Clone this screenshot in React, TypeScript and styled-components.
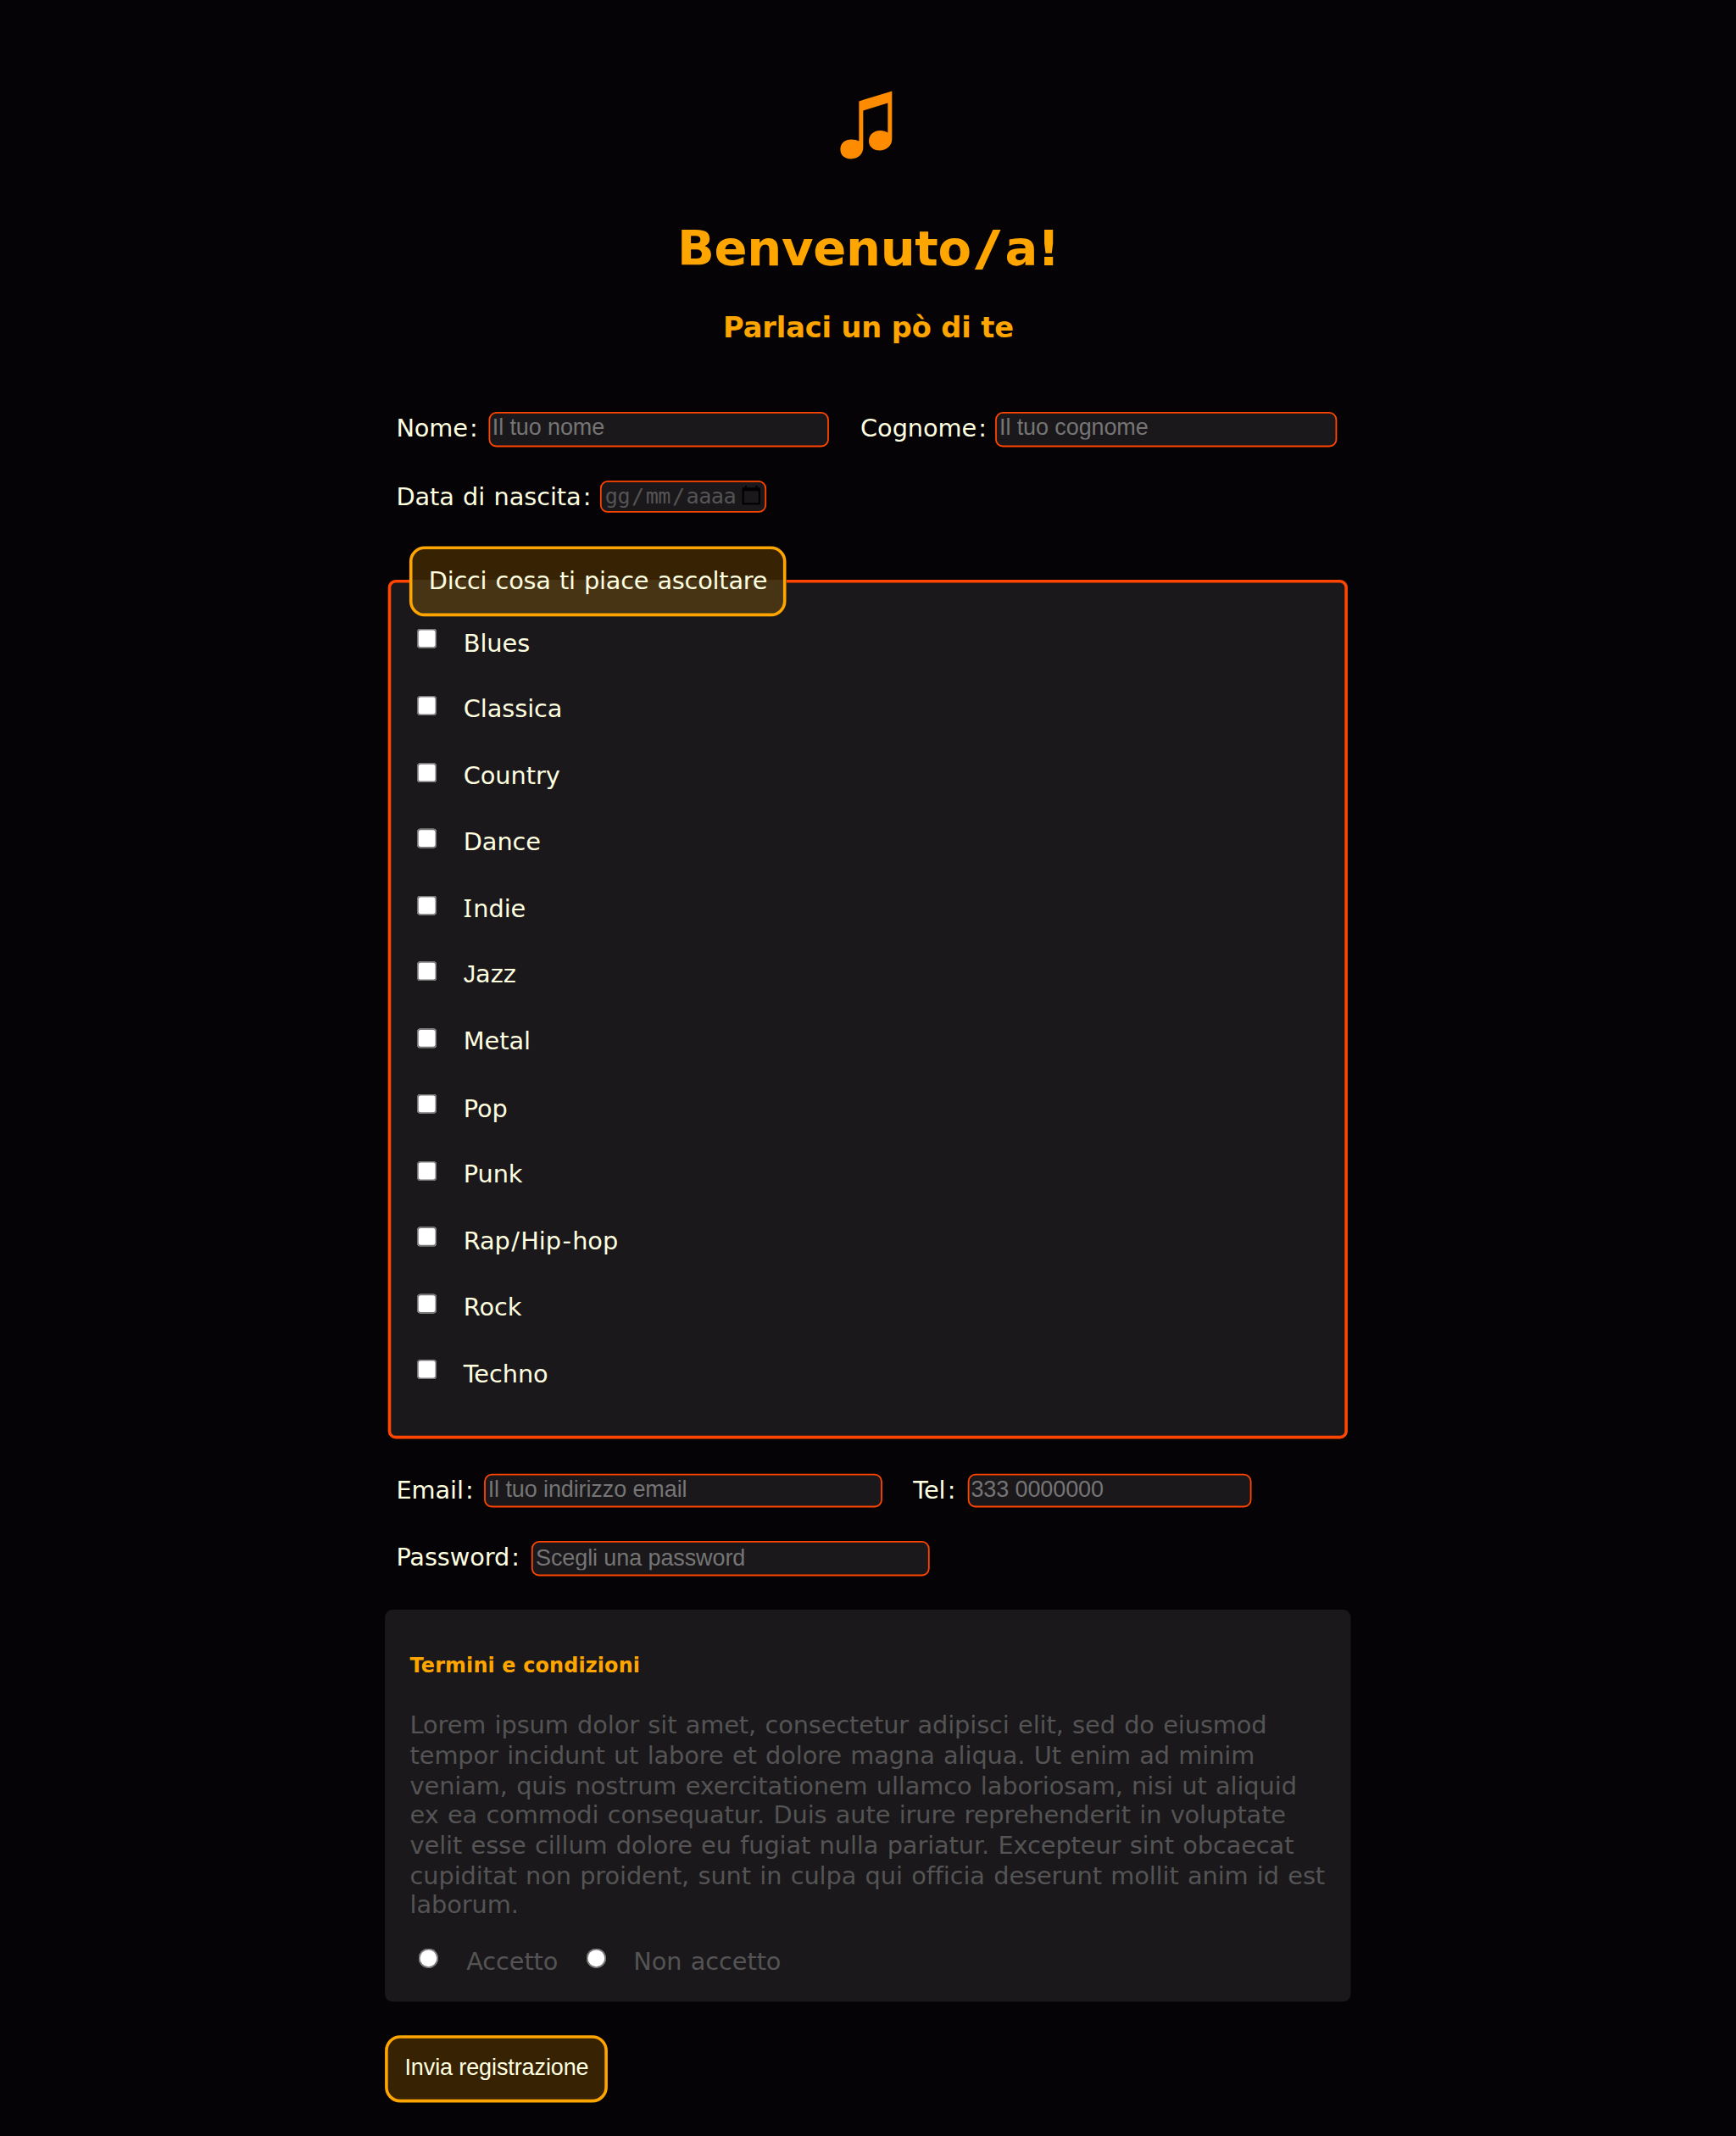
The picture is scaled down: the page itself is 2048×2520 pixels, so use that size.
import React from "react";
import styled, { createGlobalStyle } from "styled-components";

const GlobalStyle = createGlobalStyle`
  html, body {
    margin: 0;
    background: #050306;
  }
  body {
    font-family: "DejaVu Sans", Verdana, sans-serif;
    font-size: 16px;
    letter-spacing: -0.05px;
    word-spacing: 0.7px;
    color: #ffffe0;
  }
`;

const Viewport = styled.div`
  width: 2048px;
  height: 2520px;
  overflow: hidden;
`;

const Page = styled.div`
  width: 1137.78px;
  height: 1400px;
  box-sizing: border-box;
  padding-top: 52.8px;
  display: flex;
  flex-direction: column;
  align-items: center;
  transform: translateX(0.5px) scale(1.8);
  transform-origin: 0 0;
`;

const Logo = styled.svg`
  width: 55.56px;
  height: 55.56px;
  margin-right: 5px;
  fill: #ff8c00;
`;

const Title = styled.h1`
  margin: 36px 0 0;
  font-size: 32px;
  line-height: 38px;
  letter-spacing: -0.18px;
  color: #ffa500;
  white-space: nowrap;
`;

const WideSlash = styled.span`
  display: inline-block;
  width: 22px;
  text-align: center;
  transform: scaleX(1.45);
`;

const Subtitle = styled.h3`
  margin: 20.8px 0 44.1px;
  font-size: 18.72px;
  line-height: 23px;
  letter-spacing: -0.08px;
  word-spacing: 0;
  color: #ffa500;
  white-space: nowrap;
`;

const Form = styled.form`
  width: 633px;
  display: flex;
  flex-direction: column;
`;

const Row = styled.div<{ $bottom?: number }>`
  display: flex;
  align-items: flex-start;
  padding-left: 7px;
  height: 22.4px;
  margin-bottom: ${(p) => p.$bottom ?? 22}px;
`;

const Label = styled.label<{ $width: number; $gap?: number; $line?: number }>`
  flex: none;
  width: ${(p) => p.$width}px;
  margin-left: ${(p) => p.$gap ?? 0}px;
  line-height: ${(p) => p.$line ?? 22}px;
  white-space: nowrap;
`;

const Colon = styled.span`
  padding-left: 1.2px;
`;

const Input = styled.input<{ $width: number; $lift: number }>`
  flex: none;
  box-sizing: border-box;
  width: ${(p) => p.$width}px;
  height: 22.4px;
  margin: 0;
  padding: 0 1.5px ${(p) => p.$lift}px;
  border: 1px solid #ff4500;
  border-radius: 5px;
  background: #1a181b;
  color: #ffffe0;
  font: 15px "Liberation Sans", Arial, sans-serif;
  letter-spacing: -0.06px;
  word-spacing: 0;
  outline: none;
  &::placeholder {
    color: #757575;
  }
`;

const DateField = styled.div`
  flex: none;
  box-sizing: border-box;
  display: flex;
  justify-content: space-between;
  width: 109.4px;
  height: 21.5px;
  padding: 1px 3.3px 0 2.5px;
  border: 1px solid #ff4500;
  border-radius: 5px;
  background: #1a181b;
  color: #545454;
  font-family: "DejaVu Sans Mono", monospace;
  font-size: 14px;
  line-height: 17.5px;
  letter-spacing: -0.3px;
`;

const DateParts = styled.span`
  display: flex;
  gap: 1.1px;
`;

const CalendarIcon = styled.svg`
  width: 12.2px;
  height: 13px;
  margin-top: 1.8px;
`;

const Genres = styled.fieldset`
  box-sizing: border-box;
  height: 585.2px;
  margin: 0 2px 22.9px;
  padding: 0 12px;
  border: 2px solid #ff4500;
  border-radius: 5px;
  background: #1a181b;
`;

const Legend = styled.legend`
  box-sizing: border-box;
  width: 247px;
  height: 45.7px;
  padding: 0 10.3px;
  border: 2px solid #ffa500;
  border-radius: 10px;
  background: rgba(255, 165, 0, 0.2);
  line-height: 41.7px;
  letter-spacing: -0.13px;
  white-space: nowrap;
`;

const GenreList = styled.ul`
  list-style: none;
  margin: 7.2px 0 0;
  padding: 0;
`;

const Genre = styled.li`
  display: flex;
  align-items: flex-start;
  height: 43.53px;
`;

const Checkbox = styled.input`
  width: 13px;
  height: 13px;
  margin: 1.6px 17.5px 0 4.6px;
`;

const OptionLabel = styled.label<{ $width?: number }>`
  width: ${(p) => (p.$width ? p.$width + "px" : "auto")};
  line-height: 21.7px;
  white-space: nowrap;
`;

const SerifI = styled.span`
  font-family: "Noto Sans", sans-serif;
  font-size: 16.4px;
  line-height: 1;
  padding-right: 0.9px;
`;

const BaselineJ = styled.span`
  font-family: "Liberation Sans", Arial, sans-serif;
  line-height: 1;
`;

const Spread = styled.span`
  padding: 0 0.8px;
`;

const Terms = styled.section`
  box-sizing: border-box;
  height: 257px;
  margin-bottom: 21.9px;
  padding: 29px 16px 0;
  border-radius: 5px;
  background: #1a181b;
  color: #545454;
`;

const TermsTitle = styled.h5`
  margin: 0 0 21.6px;
  font-size: 13.28px;
  line-height: 16px;
  letter-spacing: 0.08px;
  word-spacing: 0;
  color: #ffa500;
`;

const TermsText = styled.p`
  margin: 0 0 16.2px;
  line-height: 19.63px;
  white-space: nowrap;
`;

const Choices = styled.div`
  display: flex;
  align-items: flex-start;
`;

const Radio = styled.input`
  width: 13px;
  height: 13px;
  margin: 2.2px 18px 0 6px;
`;

const Submit = styled.button`
  box-sizing: border-box;
  width: 145.8px;
  height: 43.9px;
  padding: 0 0 3px;
  border: 2px solid #ffa500;
  border-radius: 10px;
  background: rgba(255, 165, 0, 0.2);
  color: #ffffe0;
  font: 15px "Liberation Sans", Arial, sans-serif;
  letter-spacing: -0.06px;
  word-spacing: 0;
  white-space: nowrap;
`;

const genres = [
  "Blues",
  "Classica",
  "Country",
  "Dance",
  "Indie",
  "Jazz",
  "Metal",
  "Pop",
  "Punk",
  "Rap/Hip-hop",
  "Rock",
  "Techno",
];

const termsLines = [
  "Lorem ipsum dolor sit amet, consectetur adipisci elit, sed do eiusmod",
  "tempor incidunt ut labore et dolore magna aliqua. Ut enim ad minim",
  "veniam, quis nostrum exercitationem ullamco laboriosam, nisi ut aliquid",
  "ex ea commodi consequatur. Duis aute irure reprehenderit in voluptate",
  "velit esse cillum dolore eu fugiat nulla pariatur. Excepteur sint obcaecat",
  "cupiditat non proident, sunt in culpa qui officia deserunt mollit anim id est",
  "laborum.",
];

function GenreName({ name }: { name: string }) {
  return (
    <>
      {Array.from(name).map((char, i) => {
        if (char === "I") return <SerifI key={i}>{char}</SerifI>;
        if (char === "J") return <BaselineJ key={i}>{char}</BaselineJ>;
        if (char === "/" || char === "-") return <Spread key={i}>{char}</Spread>;
        return char;
      })}
    </>
  );
}

export default function App() {
  return (
    <Viewport>
      <GlobalStyle />
      <Page>
        <Logo viewBox="0 0 300 300" aria-hidden="true">
          <path d="M128 72L245 36V205C245 230 225 246 201 246C178 246 163 232 163 213C163 190 181 176 204 176C214 176 223 179 230 183V78L143 105V236C143 260 123 276 98 276C76 276 62 263 62 242C62 220 79 207 101 207C112 207 121 209 128 213Z" />
        </Logo>
        <Title>
          Benvenuto<WideSlash>/</WideSlash>a!
        </Title>
        <Subtitle>Parlaci un pò di te</Subtitle>
        <Form>
          <Row>
            <Label $width={60.5}>
              Nome<Colon>:</Colon>
            </Label>
            <Input $width={223.4} $lift={3.4} placeholder="Il tuo nome" />
            <Label $width={88.6} $gap={20.4}>
              Cognome<Colon>:</Colon>
            </Label>
            <Input $width={223.4} $lift={3.4} placeholder="Il tuo cognome" />
          </Row>
          <Row $bottom={21}>
            <Label $width={133.4} $line={21}>
              Data di nascita<Colon>:</Colon>
            </Label>
            <DateField>
              <DateParts>
                <span>gg</span>
                <span>/</span>
                <span>mm</span>
                <span>/</span>
                <span>aaaa</span>
              </DateParts>
              <CalendarIcon viewBox="0 0 12.2 13" fill="none" stroke="#000">
                <path d="M0.7 2.2H11.5V12.2H0.7Z" strokeWidth="1.3" />
                <path d="M0.5 2.6H11.7" strokeWidth="2.4" />
                <path d="M2.6 0V2M9.6 0V2" strokeWidth="1.2" />
              </CalendarIcon>
            </DateField>
          </Row>
          <Genres>
            <Legend>Dicci cosa ti piace ascoltare</Legend>
            <GenreList>
              {genres.map((name) => (
                <Genre key={name}>
                  <Checkbox type="checkbox" id={name} />
                  <OptionLabel htmlFor={name}>
                    <GenreName name={name} />
                  </OptionLabel>
                </Genre>
              ))}
            </GenreList>
          </Genres>
          <Row>
            <Label $width={57.7}>
              Email<Colon>:</Colon>
            </Label>
            <Input $width={260.6} $lift={3} placeholder="Il tuo indirizzo email" />
            <Label $width={35.3} $gap={20.6}>
              Tel<Colon>:</Colon>
            </Label>
            <Input $width={186.8} $lift={3} placeholder="333 0000000" />
          </Row>
          <Row>
            <Label $width={89}>
              Password<Colon>:</Colon>
            </Label>
            <Input $width={260.6} $lift={2} placeholder="Scegli una password" />
          </Row>
          <Terms>
            <TermsTitle>Termini e condizioni</TermsTitle>
            <TermsText>
              {termsLines.map((line) => (
                <React.Fragment key={line}>
                  {line}
                  <br />
                </React.Fragment>
              ))}
            </TermsText>
            <Choices>
              <Radio type="radio" name="terms" id="accept" />
              <OptionLabel htmlFor="accept" $width={72.5}>
                Accetto
              </OptionLabel>
              <Radio type="radio" name="terms" id="reject" />
              <OptionLabel htmlFor="reject">Non accetto</OptionLabel>
            </Choices>
          </Terms>
          <Submit type="button">Invia registrazione</Submit>
        </Form>
      </Page>
    </Viewport>
  );
}
